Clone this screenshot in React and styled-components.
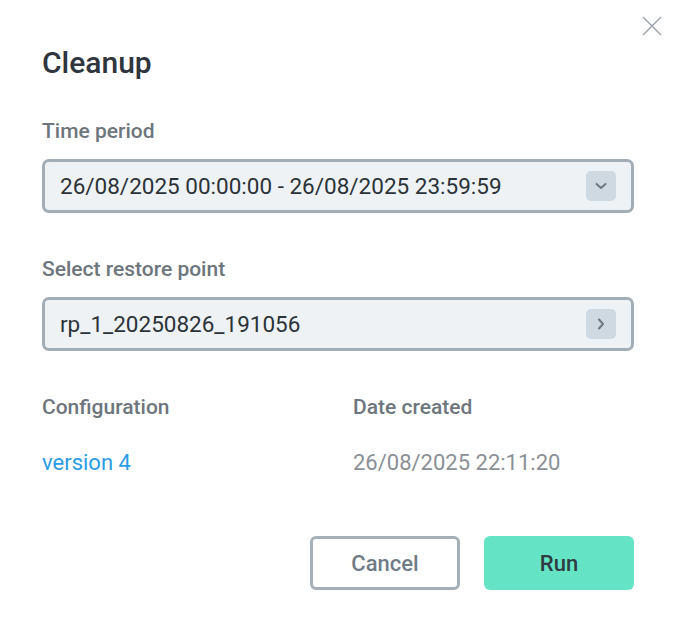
import React from 'react'
import styled, { createGlobalStyle } from 'styled-components'

const GlobalStyle = createGlobalStyle`
  html, body {
    margin: 0;
    padding: 0;
    background: #ffffff;
  }
  body {
    font-family: Roboto, "Liberation Sans", Arial, sans-serif;
  }
`

function ChevronDown() {
  return (
    <svg width="14" height="14" viewBox="0 0 14 14" fill="none">
      <path d="M2.5 5 L7 9 L11.5 5" stroke="#6b7883" strokeWidth="2" strokeLinecap="round" strokeLinejoin="round" />
    </svg>
  )
}

function ChevronRight() {
  return (
    <svg width="14" height="14" viewBox="0 0 14 14" fill="none">
      <path d="M5 2.5 L9 7 L5 11.5" stroke="#6b7883" strokeWidth="2" strokeLinecap="round" strokeLinejoin="round" />
    </svg>
  )
}

function App() {
  return (
    <>
      <GlobalStyle />
      <Dialog>
        <CloseButton aria-label="Close">
          <svg width="20" height="20" viewBox="0 0 20 20" fill="none">
            <path d="M1 1 L19 19 M19 1 L1 19" stroke="#9aa1a8" strokeWidth="1.4" />
          </svg>
        </CloseButton>

        <Title>Cleanup</Title>

        <Field>
          <Label>Time period</Label>
          <SelectBox>
            <SelectText>26/08/2025 00:00:00 - 26/08/2025 23:59:59</SelectText>
            <IconButton><ChevronDown /></IconButton>
          </SelectBox>
        </Field>

        <Field>
          <Label>Select restore point</Label>
          <SelectBox>
            <SelectText>rp_1_20250826_191056</SelectText>
            <IconButton><ChevronRight /></IconButton>
          </SelectBox>
        </Field>

        <InfoGrid>
          <Label>Configuration</Label>
          <Label>Date created</Label>
          <Value link>version 4</Value>
          <Value>26/08/2025 22:11:20</Value>
        </InfoGrid>

        <Actions>
          <Button>Cancel</Button>
          <Button primary>Run</Button>
        </Actions>
      </Dialog>
    </>
  )
}

export default App

// Style section

const Dialog = styled.div`
  position: relative;
  width: 677px;
  height: 623px;
  box-sizing: border-box;
  padding: 45px 43px 0 42px;
  display: flex;
  flex-direction: column;
`

const CloseButton = styled.button`
  position: absolute;
  top: 16px;
  right: 15px;
  width: 20px;
  height: 20px;
  padding: 0;
  border: none;
  background: none;
  display: flex;
  cursor: pointer;
`

const Title = styled.h1`
  margin: 0 0 38px;
  font-size: 30px;
  line-height: 36px;
  font-weight: 500;
  color: #2e353d;
`

const Field = styled.div`
  display: flex;
  flex-direction: column;
  gap: 16px;
  margin-bottom: 44px;
`

const Label = styled.div`
  font-size: 21px;
  line-height: 24px;
  font-weight: 500;
  color: #6d757d;
`

const SelectBox = styled.div`
  height: 54px;
  box-sizing: border-box;
  border: 3px solid #a3adb5;
  border-radius: 7px;
  background: #eef2f5;
  display: flex;
  align-items: center;
  justify-content: space-between;
  padding: 0 15px 0 15px;
`

const SelectText = styled.span`
  font-size: 22.5px;
  line-height: 26px;
  color: #2b3238;
`

const IconButton = styled.span`
  width: 30px;
  height: 30px;
  border-radius: 5px;
  background: #cfd9e1;
  display: flex;
  align-items: center;
  justify-content: center;
`

const InfoGrid = styled.div`
  display: grid;
  grid-template-columns: 311px 1fr;
  row-gap: 31px;
`

const Value = styled.div`
  font-size: 22px;
  line-height: 26px;
  color: ${p => (p.link ? '#2b9be4' : '#8a9096')};
`

const Actions = styled.div`
  display: flex;
  justify-content: flex-end;
  gap: 24px;
  margin-top: 60px;
`

const Button = styled.button`
  width: 150px;
  height: 54px;
  box-sizing: border-box;
  border-radius: 6px;
  font-family: inherit;
  font-size: 22px;
  font-weight: 500;
  cursor: pointer;
  border: ${p => (p.primary ? 'none' : '3px solid #a5afb7')};
  background: ${p => (p.primary ? '#64e4c5' : '#ffffff')};
  color: ${p => (p.primary ? '#2f3b41' : '#6f7c86')};
`
